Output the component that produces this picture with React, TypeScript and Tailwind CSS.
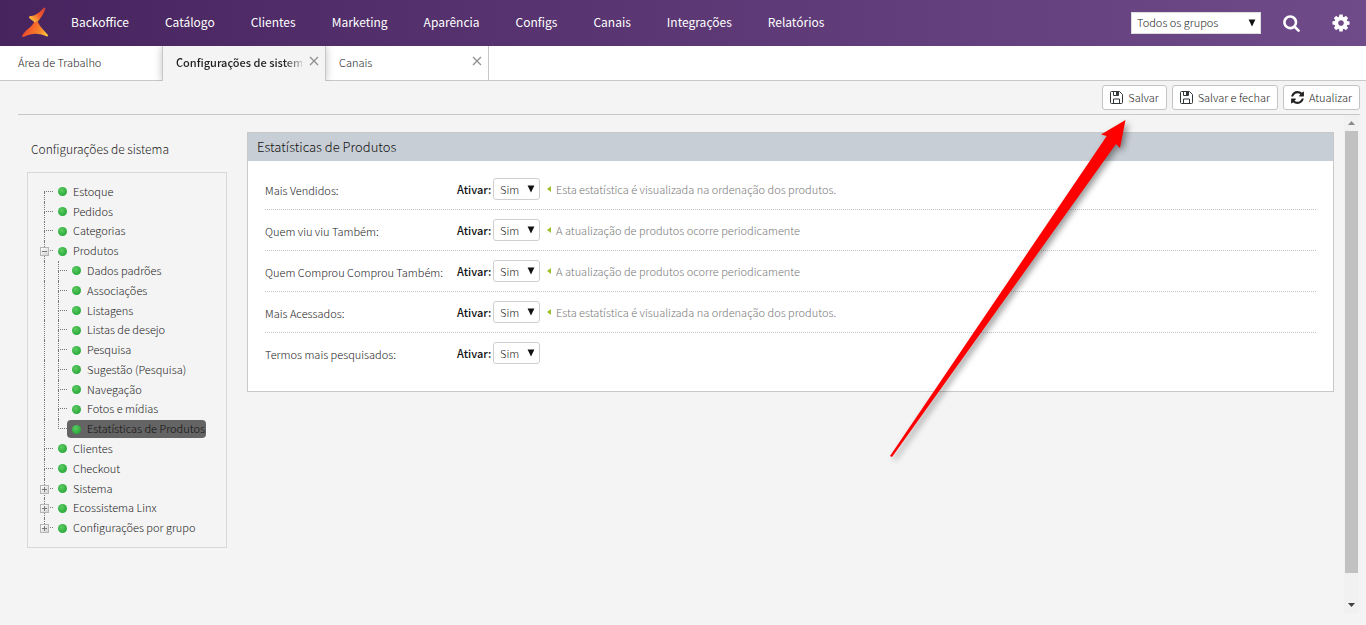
import { ReactNode } from "react";
import clsx from "clsx";

const navItems = [
  "Backoffice",
  "Catálogo",
  "Clientes",
  "Marketing",
  "Aparência",
  "Configs",
  "Canais",
  "Integrações",
  "Relatórios",
];

type TreeItem = {
  label: string;
  level: 1 | 2;
  toggle?: "+" | "-";
  selected?: boolean;
};

const treeItems: TreeItem[] = [
  { label: "Estoque", level: 1 },
  { label: "Pedidos", level: 1 },
  { label: "Categorias", level: 1 },
  { label: "Produtos", level: 1, toggle: "-" },
  { label: "Dados padrões", level: 2 },
  { label: "Associações", level: 2 },
  { label: "Listagens", level: 2 },
  { label: "Listas de desejo", level: 2 },
  { label: "Pesquisa", level: 2 },
  { label: "Sugestão (Pesquisa)", level: 2 },
  { label: "Navegação", level: 2 },
  { label: "Fotos e mídias", level: 2 },
  { label: "Estatísticas de Produtos", level: 2, selected: true },
  { label: "Clientes", level: 1 },
  { label: "Checkout", level: 1 },
  { label: "Sistema", level: 1, toggle: "+" },
  { label: "Ecossistema Linx", level: 1, toggle: "+" },
  { label: "Configurações por grupo", level: 1, toggle: "+" },
];

const settings = [
  {
    id: "mais-vendidos",
    label: "Mais Vendidos:",
    hint: "Esta estatística é visualizada na ordenação dos produtos.",
  },
  {
    id: "quem-viu",
    label: "Quem viu viu Também:",
    hint: "A atualização de produtos ocorre periodicamente",
  },
  {
    id: "quem-comprou",
    label: "Quem Comprou Comprou Também:",
    hint: "A atualização de produtos ocorre periodicamente",
  },
  {
    id: "mais-acessados",
    label: "Mais Acessados:",
    hint: "Esta estatística é visualizada na ordenação dos produtos.",
  },
  { id: "termos", label: "Termos mais pesquisados:", hint: "" },
];

const icons = {
  search: {
    viewBox: "0 0 1664 1792",
    d: "M1152 832q0-185-131.500-316.500t-316.500-131.500-316.500 131.500-131.500 316.500 131.500 316.500 316.500 131.500 316.500-131.500 131.500-316.500zm512 832q0 52-38 90t-90 38q-54 0-90-38l-343-342q-179 124-399 124-143 0-273.500-55.500t-225-150-150-225-55.500-273.500 55.500-273.500 150-225 225-150 273.500-55.500 273.500 55.500 225 150 150 225 55.500 273.500q0 220-124 399l343 343q37 37 37 90z",
  },
  cog: {
    viewBox: "0 0 1536 1792",
    d: "M1024 896q0-106-75-181t-181-75-181 75-75 181 75 181 181 75 181-75 75-181zm512-109v222q0 12-8 23t-20 13l-185 28q-19 54-39 91 35 50 107 138 10 12 10 25t-9 23q-27 37-99 108t-94 71q-12 0-26-9l-138-108q-44 23-91 38-16 136-29 186-7 28-36 28h-222q-14 0-24.500-8.500t-11.500-21.500l-28-184q-49-16-90-37l-141 107q-10 9-25 9-14 0-25-11-126-114-165-168-7-10-7-23 0-12 8-23 15-21 51-66.500t54-70.500q-27-50-41-99l-183-27q-13-2-21-12.500t-8-23.500v-222q0-12 8-23t19-13l186-28q14-46 39-92-40-57-107-138-10-12-10-24 0-10 9-23 26-36 98.500-107.500t94.500-71.500q13 0 26 10l138 107q44-23 91-38 16-136 29-186 7-28 36-28h222q14 0 24.500 8.500t11.500 21.500l28 184q49 16 90 37l142-107q9-9 24-9 13 0 25 10 129 119 165 170 7 8 7 22 0 12-8 23-15 21-51 66.500t-54 70.500q26 50 41 98l183 28q13 2 21 12.500t8 23.500z",
  },
  refresh: {
    viewBox: "0 0 1536 1792",
    d: "M1511 1056q0 5-1 7-64 268-268 434.500t-478 166.500q-146 0-282.500-55t-243.500-157l-129 129q-19 19-45 19t-45-19-19-45v-448q0-26 19-45t45-19h448q26 0 45 19t19 45-19 45l-137 137q71 66 161 102t187 36q134 0 250-65t186-179q11-17 53-117 8-23 30-23h192q13 0 22.500 9.500t9.500 22.500zm25-800v448q0 26-19 45t-45 19h-448q-26 0-45-19t-19-45 19-45l138-138q-148-137-349-137-134 0-250 65t-186 179q-11 17-53 117-8 23-30 23h-199q-13 0-22.500-9.500t-9.500-22.500v-7q65-268 270-434.500t480-166.500q146 0 284 55.500t245 156.500l130-129q19-19 45-19t45 19 19 45z",
  },
};

const Icon = ({
  name,
  className,
}: {
  name: keyof typeof icons;
  className: string;
}) => (
  <svg
    viewBox={icons[name].viewBox}
    fill="currentColor"
    className={className}
    aria-hidden="true"
  >
    <path d={icons[name].d} />
  </svg>
);

const SaveIcon = () => (
  <svg
    viewBox="0 0 13 13"
    className="size-[13px]"
    fill="none"
    stroke="#33383a"
    aria-hidden="true"
  >
    <path d="M.5 1.500a1 1 0 0 1 1-1h8l3 3v8a1 1 0 0 1-1 1h-10a1 1 0 0 1-1-1z" />
    <path d="M3.500 .5v4h5v-4M3.500 12.500v-4.500h6v4.500" />
    <path d="M7 1v3" strokeWidth="2" />
  </svg>
);

const Logo = () => (
  <svg viewBox="0 0 28 32" className="h-8 w-7" aria-label="Linx">
    <defs>
      <linearGradient id="logoTop" x1="1" y1="0" x2="0.1" y2="0.7">
        <stop offset="0" stopColor="#c9403a" />
        <stop offset="0.5" stopColor="#f0562c" />
        <stop offset="1" stopColor="#fdb338" />
      </linearGradient>
      <linearGradient id="logoBottom" x1="0" y1="0.4" x2="1" y2="0.7">
        <stop offset="0" stopColor="#e2382f" />
        <stop offset="0.4" stopColor="#f4682b" />
        <stop offset="0.7" stopColor="#f6862c" />
        <stop offset="1" stopColor="#fdc43c" />
      </linearGradient>
    </defs>
    <path
      d="M12.500 14.500C9 21 3.500 23 .8 27.500c-1.300 2.200-.5 3.300 1.900 2.100 4.200-2 8.300-3 12.800-2.700 3.600.3 6.200 1 9 2.400 1.300.6 2-.4 1-1.700-3.200-4.400-7.600-7.800-10-13.100z"
      fill="url(#logoBottom)"
    />
    <path
      d="M21.500 1.200C23 .1 23.700.4 23.200 2.200c-1.500 5-4.700 8.600-7.600 12.600l-3.200.4C11 13.600 8.300 12.600 7.300 11c-.7-1.300-.2-1.900 1.500-2C14.500 8.600 17.500 4.800 21.500 1.200z"
      fill="url(#logoTop)"
    />
  </svg>
);

const CloseIcon = () => (
  <svg
    viewBox="0 0 10 10"
    className="size-[10px]"
    fill="none"
    stroke="#8f8f8f"
    strokeWidth="1.300"
    aria-hidden="true"
  >
    <path d="M1 1l8 8M9 1L1 9" />
  </svg>
);

const Caret = ({ className }: { className: string }) => (
  <svg
    viewBox="0 0 8 8"
    className={clsx("pointer-events-none absolute size-2", className)}
    fill="#111"
    aria-hidden="true"
  >
    <path d="M.6 .6h6.800L4 7.400z" />
  </svg>
);

const ToolbarButton = ({
  icon,
  children,
}: {
  icon: ReactNode;
  children: ReactNode;
}) => (
  <button
    type="button"
    className="flex h-[25px] items-center gap-[5px] rounded-[3px] border border-[#c4c4c4] bg-white px-[7px] pb-px text-[#222]"
  >
    {icon}
    {children}
  </button>
);

const TreeRow = ({ item, last }: { item: TreeItem; last: boolean }) => {
  const index = treeItems.indexOf(item);
  const lastChild = item.level === 2 && treeItems[index + 1]?.level === 1;
  return (
    <li className="relative flex items-center">
      {item.level === 2 && (
        <span className="w-[14px] self-stretch border-l border-dotted border-[#777]" />
      )}
      <span className="flex w-[9px] flex-col self-stretch">
        <span
          className={clsx(
            "h-1/2 border-b border-dotted border-[#777]",
            index !== 0 && "border-l"
          )}
        />
        {!last && !lastChild && (
          <span className="h-1/2 border-l border-dotted border-[#777]" />
        )}
      </span>
      <button
        type="button"
        className={clsx(
          "flex h-[18px] items-center gap-[6px] rounded-[4px] pr-px pl-[5px] leading-4 whitespace-nowrap",
          item.selected ? "bg-[#646464] text-[#111]" : "text-[#222]"
        )}
      >
        <span className="size-[9px] rounded-full bg-radial-[at_40%_35%] from-[#5ccb62] to-[#179c2b]" />
        <span className="pb-[2px]">{item.label}</span>
      </button>
      {item.toggle && (
        <button
          type="button"
          aria-label={item.toggle === "+" ? "Expandir" : "Recolher"}
          className="absolute top-[6px] -left-1 size-[9px] border border-[#b5b5b5] bg-linear-to-br from-white to-[#d4d4d4]"
        >
          <svg viewBox="0 0 7 7" className="size-[7px]" stroke="#777">
            <path d={item.toggle === "+" ? "M1 3.500h5M3.500 1v5" : "M1 3.500h5"} />
          </svg>
        </button>
      )}
    </li>
  );
};

const App = () => {
  return (
    <div className="relative flex min-h-screen flex-col overflow-hidden bg-[#f4f4f4] font-['Noto_Sans_CJK_SC',sans-serif] text-[11px] leading-[18px] font-light text-[#222]">
      <header className="flex h-[46px] items-center bg-linear-to-r from-[#48245f] to-[#704b8a] pr-4 pl-[22px] text-white">
        <Logo />
        <nav className="ml-[21px] flex gap-9 pb-[2px] text-[12px] font-normal">
          {navItems.map((item) => (
            <a key={item} href="#" className="whitespace-nowrap">
              {item}
            </a>
          ))}
        </nav>
        <div className="relative ml-auto">
          <select
            aria-label="Grupo"
            className="block h-[22px] w-[130px] appearance-none border border-[#ddd] bg-white pb-[2px] pl-[5px] text-[#222]"
          >
            <option>Todos os grupos</option>
          </select>
          <Caret className="top-[7px] right-[5px]" />
        </div>
        <button type="button" aria-label="Buscar" className="ml-[22px]">
          <Icon name="search" className="h-[18px] w-[17px]" />
        </button>
        <button type="button" aria-label="Configurações" className="ml-8">
          <Icon name="cog" className="h-5 w-[18px]" />
        </button>
      </header>

      <div className="flex h-[35px] bg-white">
        <div className="w-[162px] border-b border-[#c8c8c8] pt-[7px] pl-[18px]">
          <a href="#">Área de Trabalho</a>
        </div>
        <div className="relative z-10 flex w-[164px] border-x border-[#c8c8c8] bg-[#f4f4f4] pt-[7px] pl-[13px] shadow-[0_0_8px_rgba(0,0,0,0.25)] [clip-path:inset(0_-10px_0_-10px)]">
          <a
            href="#"
            className="w-[126px] overflow-hidden bg-linear-to-r from-[#1c1c1c] from-85% to-[#1c1c1c]/20 bg-clip-text font-medium whitespace-nowrap text-transparent"
          >
            Configurações de sistema
          </a>
          <button type="button" aria-label="Fechar aba" className="ml-[7px] h-4">
            <CloseIcon />
          </button>
        </div>
        <div className="flex w-[163px] justify-between border-r border-b border-[#c8c8c8] pt-[7px] pr-[6px] pl-[13px]">
          <a href="#">Canais</a>
          <button type="button" aria-label="Fechar aba" className="h-4">
            <CloseIcon />
          </button>
        </div>
        <div className="flex-1 border-b border-[#c8c8c8]" />
      </div>

      <div className="mr-[6px] ml-[18px] flex justify-end gap-[5px] border-b border-[#c8c8c8] pt-1 pb-1">
        <ToolbarButton icon={<SaveIcon />}>Salvar</ToolbarButton>
        <ToolbarButton icon={<SaveIcon />}>Salvar e fechar</ToolbarButton>
        <ToolbarButton
          icon={<Icon name="refresh" className="h-[15px] w-[13px]" />}
        >
          Atualizar
        </ToolbarButton>
      </div>

      <div className="flex flex-1 items-start pr-[7px] pl-[27px]">
        <aside className="w-[200px] pt-[25px]">
          <h2 className="pl-1 text-[12px]">Configurações de sistema</h2>
          <ul className="mt-[14px] grid h-[376px] auto-rows-fr border border-[#d8d8d8] py-[9px] pl-4">
            {treeItems.map((item, i) => (
              <TreeRow
                key={item.label}
                item={item}
                last={i === treeItems.length - 1}
              />
            ))}
          </ul>
        </aside>

        <main className="mt-[17px] ml-5 flex-1 border border-[#c8c8c8] bg-white">
          <h1 className="h-7 bg-[#c8ced5] pl-[9px] text-[13px] leading-7 text-[#111]">
            Estatísticas de Produtos
          </h1>
          <form className="px-[17px] pt-2 pb-[17px]">
            {settings.map((row) => (
              <div
                key={row.id}
                className="flex h-[41px] items-center border-b border-dotted border-[#c4c4c4] last:border-transparent"
              >
                <span className="w-48 pt-[2px]">{row.label}</span>
                <label htmlFor={row.id} className="w-9 font-medium text-[#111]">
                  Ativar:
                </label>
                <div className="relative">
                  <select
                    id={row.id}
                    className="block h-[22px] w-[47px] appearance-none rounded-[3px] border border-[#cfcfcf] bg-white pl-[6px]"
                  >
                    <option>Sim</option>
                    <option>Não</option>
                  </select>
                  <Caret className="top-[7px] right-[5px]" />
                </div>
                {row.hint && (
                  <p className="flex items-center gap-[5px] pl-[7px] text-[#777]">
                    <svg viewBox="0 0 4 6" className="h-[6px] w-1" fill="#9dc02b">
                      <path d="M4 0v6L0 3z" />
                    </svg>
                    {row.hint}
                  </p>
                )}
              </div>
            ))}
          </form>
        </main>

        {/* scrollbar */}
        <div className="ml-[10px] flex h-[498px] w-[15px] flex-col items-center bg-[#f1f1f1]">
          <svg viewBox="0 0 7 4" className="my-[6px] h-1 w-[7px]" fill="#8a8a8a">
            <path d="M3.500 0L7 4H0z" />
          </svg>
          <div className="h-[442px] w-[13px] bg-[#c1c1c1]" />
          <svg
            viewBox="0 0 7 4"
            className="mt-auto mb-[6px] h-1 w-[7px]"
            fill="#404040"
          >
            <path d="M0 0h7L3.500 4z" />
          </svg>
        </div>
      </div>

      {/* arrow pointing at the save button */}
      <svg
        viewBox="0 0 250 350"
        className="pointer-events-none absolute top-[115px] right-[236px] z-20 h-[350px] w-[250px] drop-shadow-[3px_3px_3px_rgba(0,0,0,0.4)]"
        fill="#fe0000"
        aria-hidden="true"
      >
        <path d="M245.500 5L221 19.500L226.700 21L10 341L12 342L236 29L240 33z" />
      </svg>
    </div>
  );
};

export default App;
